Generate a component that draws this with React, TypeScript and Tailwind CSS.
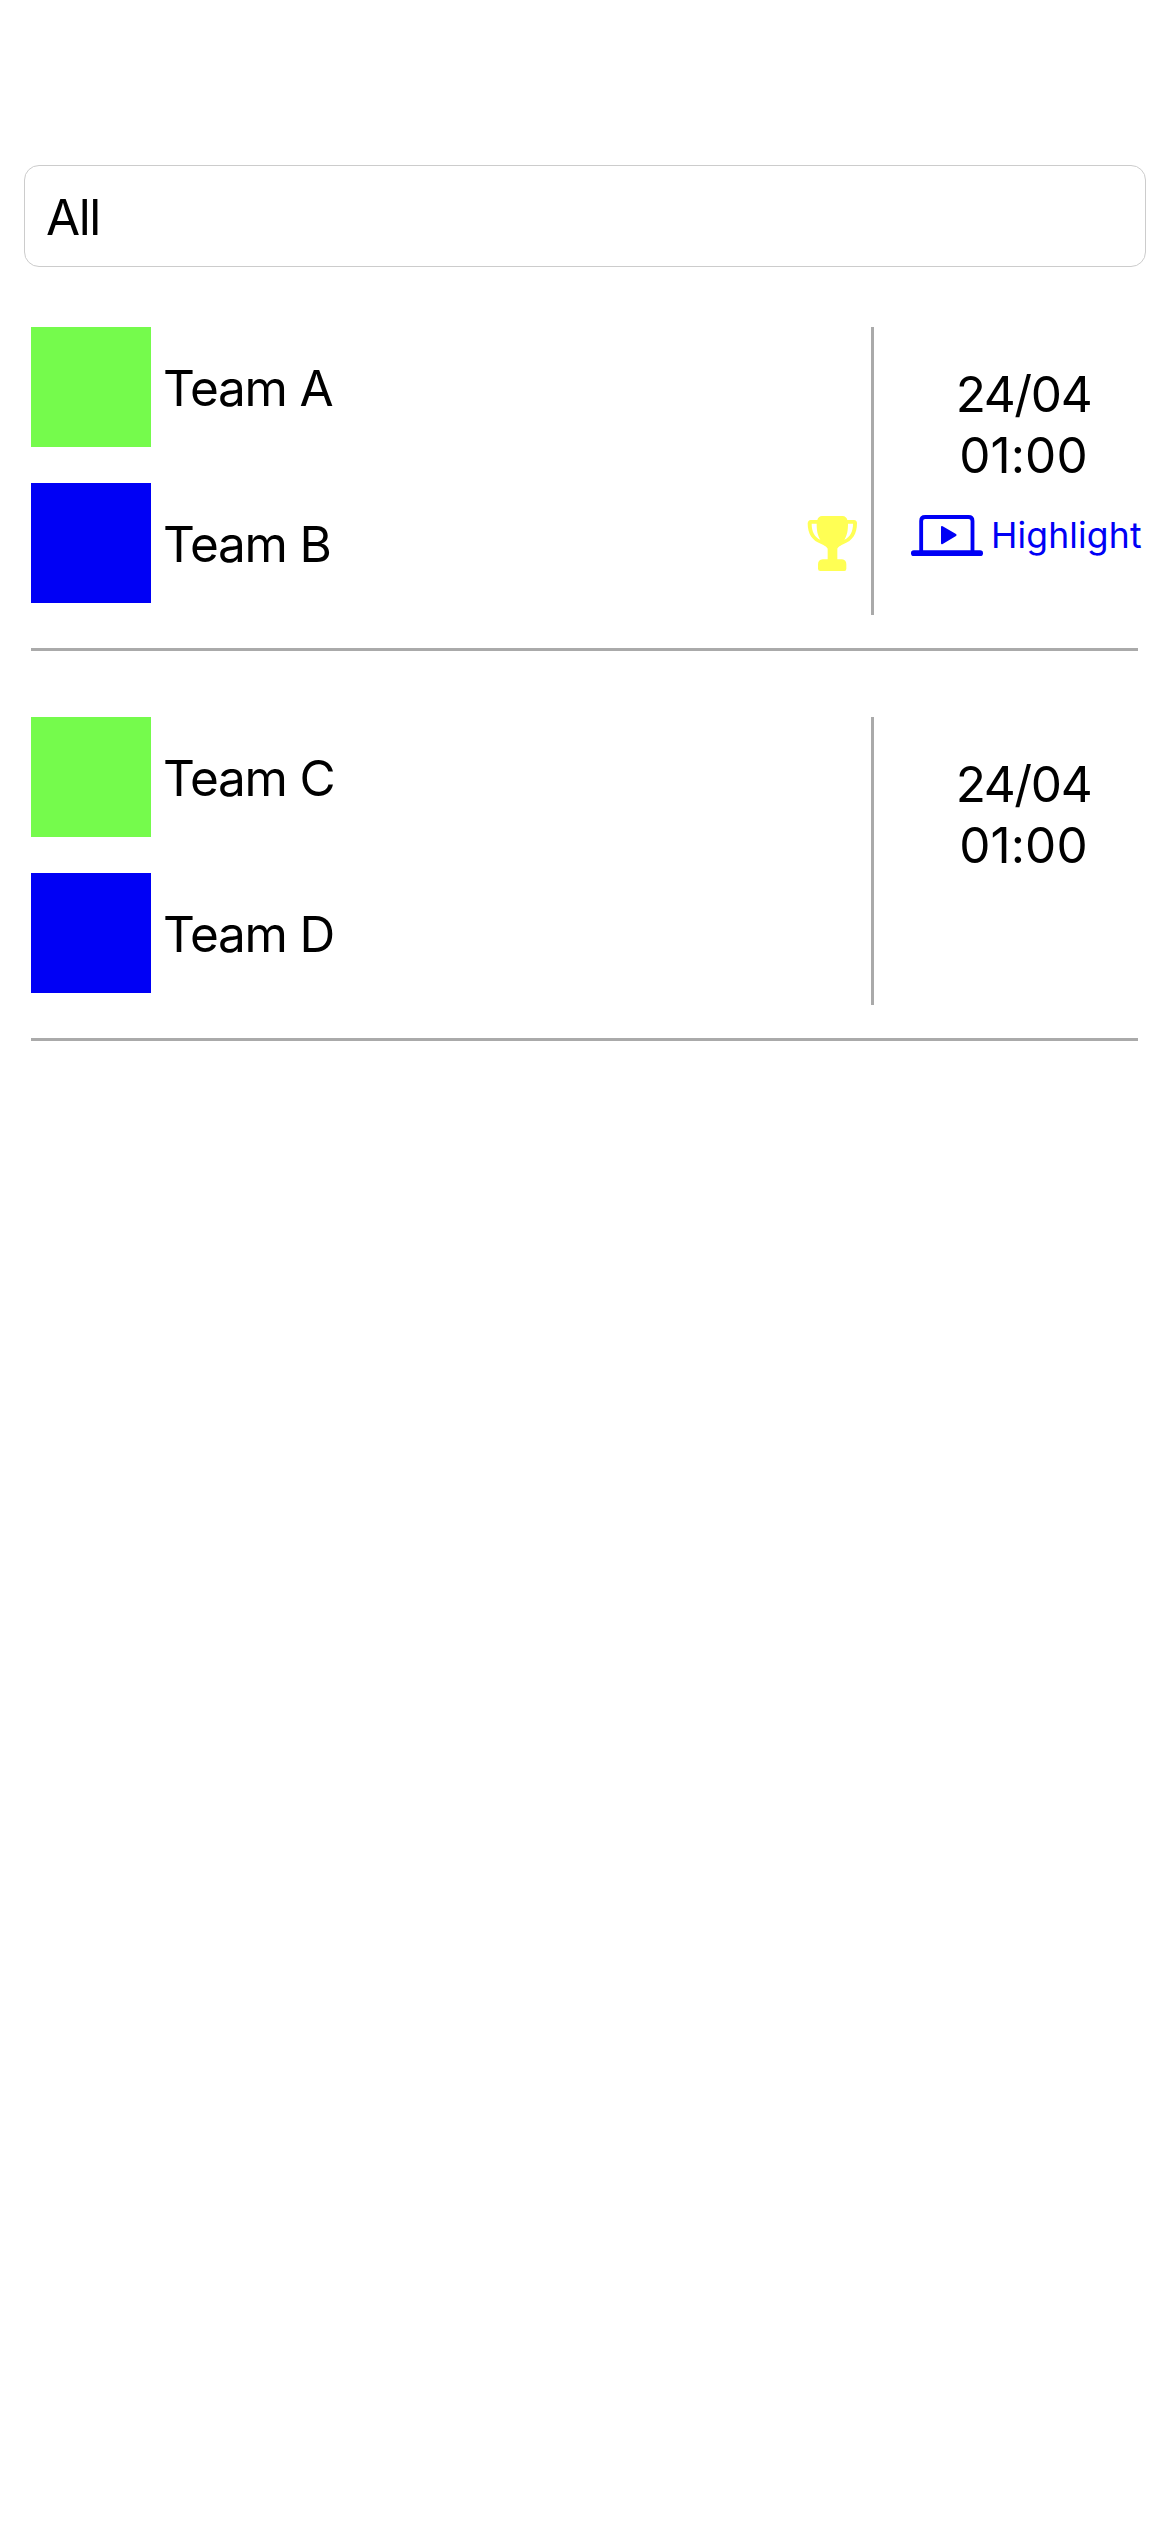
type Match = {
  home: string;
  away: string;
  date: string;
  time: string;
  awayWon?: boolean;
  highlight?: boolean;
};

const matches: Match[] = [
  { home: 'Team A', away: 'Team B', date: '24/04', time: '01:00', awayWon: true, highlight: true },
  { home: 'Team C', away: 'Team D', date: '24/04', time: '01:00' },
];

function Trophy() {
  return (
    <svg className="mr-[13px] h-[57px] w-[51px] shrink-0" viewBox="33 30 153 171" fill="#ffff54" fillRule="evenodd">
      <path d="M78 33H140Q151 34 154 45H174Q183 46 183 55C183 87 169 108 143 117C135 121 124 127 124 132V163H138Q151 164 151 178V191Q151 198 145 198H73Q66 198 66 191V178Q66 164 80 163H95V132C95 127 84 121 76 117C49 108 35 87 35 55Q36 46 44 45H64Q67 34 78 33ZM47 56H62C62 78 65 92 73 104C56 96 47 80 47 56ZM171 56H156C156 78 153 92 145 104C162 96 171 80 171 56Z" />
    </svg>
  );
}

function LaptopPlay() {
  return (
    <svg className="h-[43px] w-[73px] shrink-0" viewBox="33 27 219 129" fill="#0000f5">
      <path d="M63.5 140V48Q63.5 36 75.5 36H205.5Q217.5 36 217.5 48V140" fill="none" stroke="#0000f5" strokeWidth="11.5" />
      <rect x="33" y="136" width="216" height="17" rx="8.5" />
      <path d="M123 67Q123 61 128 64L168 87Q172 90 168 93L128 117Q123 119 123 114Z" />
    </svg>
  );
}

function Team({ name, color, won }: { name: string; color: string; won?: boolean }) {
  return (
    <div className="flex h-[120px] items-center">
      <div className={`size-[120px] shrink-0 ${color}`} />
      <span className="ml-[12px] flex-1 pt-[2px] tracking-[-1.2px]">{name}</span>
      {won && <Trophy />}
    </div>
  );
}

function MatchRow({ match }: { match: Match }) {
  return (
    <div className="mr-[32px] ml-[31px] h-[324px] border-b-[3px] border-[#aaaaaa]">
      <div className="flex h-[288px]">
        <div className="flex w-[843px] shrink-0 flex-col gap-[36px] border-r-[3px] border-[#aaaaaa]">
          <Team name={match.home} color="bg-[#75fb4c]" />
          <Team name={match.away} color="bg-[#0000f5]" won={match.awayWon} />
        </div>
        <div className="ml-[37px] flex w-[225px] shrink-0 flex-col items-center pt-[37px]">
          <div className="leading-[61px] tracking-[-1.4px]">{match.date}</div>
          <div className="leading-[61px] tracking-[0.1px]">{match.time}</div>
          {match.highlight && (
            <div className="mt-[28px] flex h-[43px] w-full items-center">
              <LaptopPlay />
              <span className="ml-[7px] text-[35.5px] leading-[43px] tracking-[0.15px] whitespace-nowrap text-[#0000f5]">
                Highlight
              </span>
            </div>
          )}
        </div>
      </div>
    </div>
  );
}

export default function App() {
  return (
    <div className="flex min-h-[2532px] w-[1170px] flex-col bg-white pt-[165px] font-['Inter',sans-serif] text-[49.5px] leading-[60px] text-black">
      <div className="mx-[24px] flex h-[102px] items-center rounded-[15px] border border-[#cccccc] pl-[21px]">
        <span className="pt-[2px] tracking-[-1.5px]">All</span>
      </div>
      <div className="mt-[60px] flex flex-col gap-[66px]">
        {matches.map((m) => (
          <MatchRow key={m.home} match={m} />
        ))}
      </div>
    </div>
  );
}
